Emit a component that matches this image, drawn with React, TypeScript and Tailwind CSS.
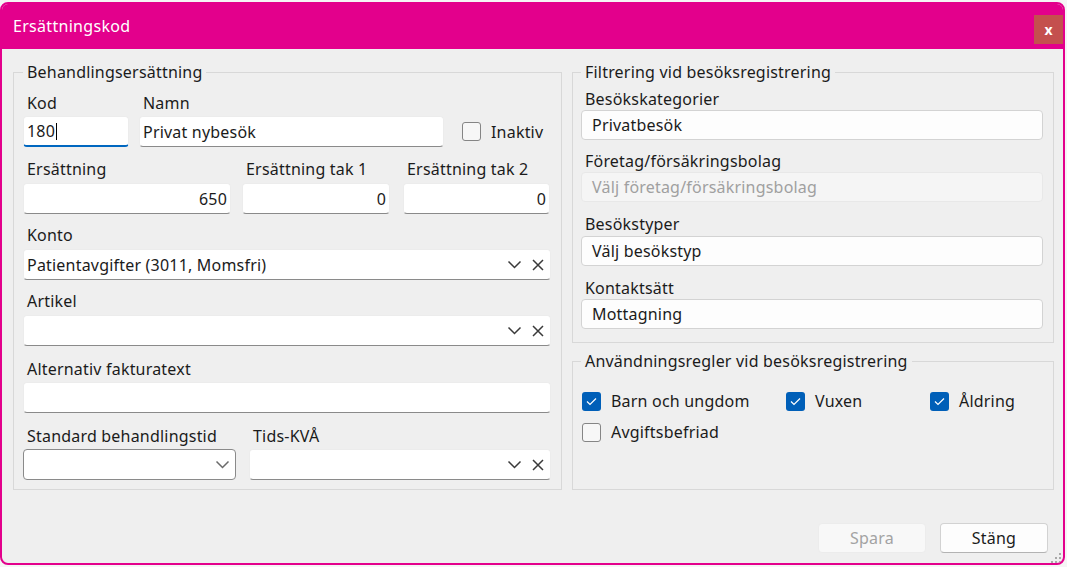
import React from 'react'

function Chevron({ className = '' }: { className?: string }) {
  return (
    <svg width="15" height="9" viewBox="0 0 15 9" className={className} fill="none">
      <path d="M1.5 1.5 L7.5 7.5 L13.5 1.5" stroke="currentColor" strokeWidth="1.5" />
    </svg>
  )
}

function Cross() {
  return (
    <svg width="12" height="12" viewBox="0 0 12 12" fill="none">
      <path d="M1 1 L11 11 M11 1 L1 11" stroke="currentColor" strokeWidth="1.5" />
    </svg>
  )
}

function Label({ children, className = '' }: { children: React.ReactNode; className?: string }) {
  return <div className={`h-[20px] pl-1 leading-[22px] whitespace-nowrap text-[#1b1b1b] ${className}`}>{children}</div>
}

function Field({
  value,
  right,
  focused,
  combo,
  className = '',
}: {
  value?: string
  right?: boolean
  focused?: boolean
  combo?: boolean
  className?: string
}) {
  return (
    <div
      className={`flex h-[31px] items-center rounded-[4px] border border-[#ececec] bg-white pl-[3px] text-[#1b1b1b] ${
        focused ? 'border-b-2 border-b-[#0067c0]' : 'border-b-[#8a8a8a]'
      } ${right ? 'justify-end pr-[3px]' : 'pr-[6px]'} ${className}`}
    >
      <span className="truncate">{value}</span>
      {focused && <span className="ml-px h-[17px] w-px bg-black" />}
      {combo && (
        <div className="ml-auto flex items-center gap-[10px] text-[#3a3a3a]">
          <Chevron />
          <Cross />
        </div>
      )}
    </div>
  )
}

function RightField({ value, disabled }: { value: string; disabled?: boolean }) {
  return (
    <div
      className={`flex h-[30px] items-center rounded-[4px] border px-[10px] ${
        disabled ? 'border-[#e8e8e8] bg-[#f5f5f5] text-[#a0a0a0]' : 'border-[#d3d3d3] bg-[#fdfdfd] text-[#1b1b1b]'
      }`}
    >
      {value}
    </div>
  )
}

function Check({ checked, label, className = '' }: { checked?: boolean; label: string; className?: string }) {
  return (
    <div className={`flex h-[24px] items-center gap-[10px] ${className}`}>
      {checked ? (
        <div className="flex h-[19px] w-[19px] items-center justify-center rounded-[3px] bg-[#005fb8]">
          <svg width="11" height="9" viewBox="0 0 11 9" fill="none">
            <path d="M1 4.5 L4 7.5 L10 1.5" stroke="white" strokeWidth="1.2" />
          </svg>
        </div>
      ) : (
        <div className="h-[19px] w-[19px] rounded-[3px] border border-[#858585] bg-[#f7f7f7]" />
      )}
      <span className="text-[#1b1b1b]">{label}</span>
    </div>
  )
}

export default function App() {
  return (
    <div className="h-[567px] w-[1067px] overflow-hidden bg-[#f5f5f5] pt-[2px] font-['Noto_Sans',sans-serif] text-[16px] tracking-[0.2px]">
      <div className="flex h-[563px] w-[1065px] flex-col overflow-hidden rounded-[8px] border-2 border-[#e3008c] bg-[#efefef]">
        {/* title bar */}
        <div className="flex h-[45px] shrink-0 items-start bg-[#e3008c]">
          <div className="mt-[12px] pl-[11px] leading-[20px] tracking-[0.3px] text-white">Ersättningskod</div>
          <div className="ml-auto mt-[11px] flex h-[29px] w-[29px] items-center justify-center bg-[#c4504e] text-[14px] font-bold leading-none tracking-normal text-white">
            x
          </div>
        </div>

        <div className="flex gap-[10px] pl-[11px] pt-[13px]">
          {/* left group */}
          <fieldset className="h-[428px] w-[549px] border border-[#d8d8d8] pl-[9px] pr-[10px] pt-[10px]">
            <legend className="px-1 leading-[20px] text-[#1b1b1b]">Behandlingsersättning</legend>

            <div className="flex">
              <div className="w-[106px]">
                <Label className="mb-[4px]">Kod</Label>
                <Field value="180" focused />
              </div>
              <div className="ml-[10px] w-[305px]">
                <Label className="mb-[4px]">Namn</Label>
                <Field value="Privat nybesök" />
              </div>
              <div className="ml-[18px] mt-[24px] flex h-[31px] items-center gap-[10px]">
                <div className="h-[19px] w-[19px] rounded-[3px] border border-[#858585] bg-[#f7f7f7]" />
                <span className="text-[#1b1b1b]">Inaktiv</span>
              </div>
            </div>

            <div className="mt-[11px] flex">
              <div className="w-[208px]">
                <Label className="mb-[5px]">Ersättning</Label>
                <Field value="650" right />
              </div>
              <div className="ml-[11px] w-[148px]">
                <Label className="mb-[5px]">Ersättning tak 1</Label>
                <Field value="0" right />
              </div>
              <div className="ml-[13px] w-[147px]">
                <Label className="mb-[5px]">Ersättning tak 2</Label>
                <Field value="0" right />
              </div>
            </div>

            <div className="mt-[10px]">
              <Label className="mb-[5px]">Konto</Label>
              <Field value="Patientavgifter (3011, Momsfri)" combo />
            </div>

            <div className="mt-[10px]">
              <Label className="mb-[5px]">Artikel</Label>
              <Field combo />
            </div>

            <div className="mt-[12px]">
              <Label className="mb-[4px]">Alternativ fakturatext</Label>
              <Field />
            </div>

            <div className="mt-[12px] flex">
              <div className="w-[213px]">
                <Label className="mb-[4px]">Standard behandlingstid</Label>
                <div className="flex h-[31px] items-center rounded-[4px] border border-[#8a8a8a] bg-white pr-[5px]">
                  <Chevron className="ml-auto text-[#6a6a6a]" />
                </div>
              </div>
              <div className="ml-[13px] flex-1">
                <Label className="mb-[4px]">Tids-KVÅ</Label>
                <Field combo />
              </div>
            </div>
          </fieldset>

          {/* right column */}
          <div className="flex w-[482px] flex-col">
            <fieldset className="h-[281px] border border-[#d8d8d8] pl-[8px] pr-[10px] pt-[6px]">
              <legend className="px-1 leading-[20px] text-[#1b1b1b]">Filtrering vid besöksregistrering</legend>
              <Label className="mb-[2px]">Besökskategorier</Label>
              <RightField value="Privatbesök" />
              <Label className="mb-[2px] mt-[10px]">Företag/försäkringsbolag</Label>
              <RightField value="Välj företag/försäkringsbolag" disabled />
              <Label className="mb-[3px] mt-[11px]">Besökstyper</Label>
              <RightField value="Välj besökstyp" />
              <Label className="mb-[2px] mt-[11px]">Kontaktsätt</Label>
              <RightField value="Mottagning" />
            </fieldset>

            <fieldset className="mt-[8px] h-[139px] border border-[#d8d8d8] pl-[9px] pr-[10px] pt-[18px]">
              <legend className="-ml-px px-1 leading-[20px] text-[#1b1b1b]">
                Användningsregler vid besöksregistrering
              </legend>
              <div className="flex">
                <Check checked label="Barn och ungdom" className="w-[204px]" />
                <Check checked label="Vuxen" className="w-[144px]" />
                <Check checked label="Åldring" />
              </div>
              <Check label="Avgiftsbefriad" className="mt-[7px]" />
            </fieldset>
          </div>
        </div>

        {/* footer */}
        <div className="mt-[33px] flex justify-end gap-[14px] pr-[15px]">
          <div className="flex h-[30px] w-[108px] items-center justify-center rounded-[4px] border border-[#ececec] bg-[#f8f8f8] text-[#a3a3a3]">
            Spara
          </div>
          <div className="flex h-[30px] w-[108px] items-center justify-center rounded-[4px] border border-[#d2d2d2] border-b-[#b3b3b3] bg-[#fdfdfd] text-[#1b1b1b]">
            Stäng
          </div>
        </div>
        <div className="mt-auto flex justify-end pb-[2px] pr-[2px]">
          <svg width="10" height="10" viewBox="0 0 10 10">
            <g fill="#a8a8a8">
              <rect x="8" y="0" width="2" height="2" />
              <rect x="4" y="4" width="2" height="2" />
              <rect x="8" y="4" width="2" height="2" />
              <rect x="0" y="8" width="2" height="2" />
              <rect x="4" y="8" width="2" height="2" />
              <rect x="8" y="8" width="2" height="2" />
            </g>
          </svg>
        </div>
      </div>
    </div>
  )
}
